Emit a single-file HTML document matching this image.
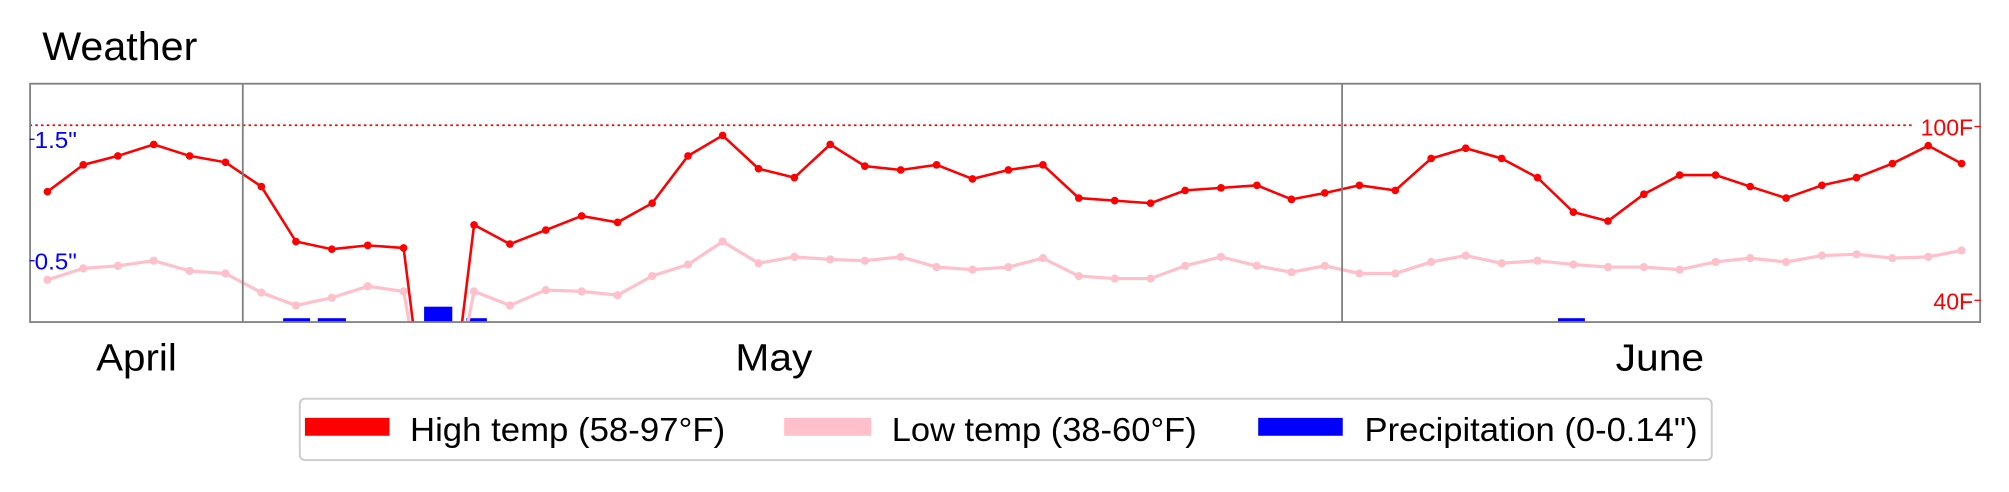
<!DOCTYPE html>
<html><head><meta charset="utf-8"><style>
html,body{margin:0;padding:0;background:#fff;width:2009px;height:492px;overflow:hidden}
svg{display:block}
text{font-family:"Liberation Sans",Arial,sans-serif}
</style></head><body>
<svg width="2009" height="492" viewBox="0 0 1568 385" preserveAspectRatio="none" xmlns="http://www.w3.org/2000/svg">
<defs><clipPath id="c"><rect x="23" y="65" width="1523" height="187"/></clipPath></defs>
<text x="33" y="47" font-size="31" fill="#000" textLength="121" lengthAdjust="spacingAndGlyphs">Weather</text>
<line x1="23" y1="98" x2="1492" y2="98" stroke="#f00" stroke-width="1.3" stroke-dasharray="2,2.5"/>
<g clip-path="url(#c)">
<g fill="#00f">
<rect x="221" y="249" width="21" height="3"/><rect x="248" y="249" width="22" height="3"/>
<rect x="331" y="240" width="22" height="12"/><rect x="364" y="249" width="16" height="3"/>
<rect x="1216" y="249" width="21" height="3"/>
</g>
<g stroke="#ffc0cb" fill="#ffc0cb" stroke-width="2.5">
<polyline fill="none" points="37,219 65,210 92,208 120,204 148,212 176,214 204,229 231,239 259,233 287,224 315,228 328,300"/>
<polyline fill="none" points="356,300 370,228 398,239 426,227 454,228 482,231 509,216 537,207 564,189 592,206 620,201 648,203 675,204 703,201 731,209 759,211 787,209 814,202 842,216 870,218 898,218 925,208 953,201 981,208 1008,213 1034,208 1061,214 1089,214 1117,205 1144,200 1172,206 1200,204 1228,207 1255,209 1283,209 1311,211 1339,205 1366,202 1394,205 1422,200 1449,199 1477,202 1505,201 1531,196"/>
</g>
<g fill="#ffc0cb">
<circle cx="37" cy="219" r="3.2"/><circle cx="65" cy="210" r="3.2"/><circle cx="92" cy="208" r="3.2"/><circle cx="120" cy="204" r="3.2"/><circle cx="148" cy="212" r="3.2"/><circle cx="176" cy="214" r="3.2"/><circle cx="204" cy="229" r="3.2"/><circle cx="231" cy="239" r="3.2"/><circle cx="259" cy="233" r="3.2"/><circle cx="287" cy="224" r="3.2"/><circle cx="315" cy="228" r="3.2"/><circle cx="370" cy="228" r="3.2"/><circle cx="398" cy="239" r="3.2"/><circle cx="426" cy="227" r="3.2"/><circle cx="454" cy="228" r="3.2"/><circle cx="482" cy="231" r="3.2"/><circle cx="509" cy="216" r="3.2"/><circle cx="537" cy="207" r="3.2"/><circle cx="564" cy="189" r="3.2"/><circle cx="592" cy="206" r="3.2"/><circle cx="620" cy="201" r="3.2"/><circle cx="648" cy="203" r="3.2"/><circle cx="675" cy="204" r="3.2"/><circle cx="703" cy="201" r="3.2"/><circle cx="731" cy="209" r="3.2"/><circle cx="759" cy="211" r="3.2"/><circle cx="787" cy="209" r="3.2"/><circle cx="814" cy="202" r="3.2"/><circle cx="842" cy="216" r="3.2"/><circle cx="870" cy="218" r="3.2"/><circle cx="898" cy="218" r="3.2"/><circle cx="925" cy="208" r="3.2"/><circle cx="953" cy="201" r="3.2"/><circle cx="981" cy="208" r="3.2"/><circle cx="1008" cy="213" r="3.2"/><circle cx="1034" cy="208" r="3.2"/><circle cx="1061" cy="214" r="3.2"/><circle cx="1089" cy="214" r="3.2"/><circle cx="1117" cy="205" r="3.2"/><circle cx="1144" cy="200" r="3.2"/><circle cx="1172" cy="206" r="3.2"/><circle cx="1200" cy="204" r="3.2"/><circle cx="1228" cy="207" r="3.2"/><circle cx="1255" cy="209" r="3.2"/><circle cx="1283" cy="209" r="3.2"/><circle cx="1311" cy="211" r="3.2"/><circle cx="1339" cy="205" r="3.2"/><circle cx="1366" cy="202" r="3.2"/><circle cx="1394" cy="205" r="3.2"/><circle cx="1422" cy="200" r="3.2"/><circle cx="1449" cy="199" r="3.2"/><circle cx="1477" cy="202" r="3.2"/><circle cx="1505" cy="201" r="3.2"/><circle cx="1531" cy="196" r="3.2"/>
</g>
<g stroke="#f00" stroke-width="2" fill="none">
<polyline points="37,150 65,129 92,122 120,113 148,122 176,127 204,146 231,189 259,195 287,192 315,194 327,290"/>
<polyline points="356,290 370,176 398,191 426,180 454,169 482,174 509,159 537,122 564,106 592,132 620,139 648,113 675,130 703,133 731,129 759,140 787,133 814,129 842,155 870,157 898,159 925,149 953,147 981,145 1008,156 1034,151 1061,145 1089,149 1117,124 1144,116 1172,124 1200,139 1228,166 1255,173 1283,152 1311,137 1339,137 1366,146 1394,155 1422,145 1449,139 1477,128 1505,114 1531,128"/>
</g>
<g fill="#f00">
<circle cx="37" cy="150" r="3"/><circle cx="65" cy="129" r="3"/><circle cx="92" cy="122" r="3"/><circle cx="120" cy="113" r="3"/><circle cx="148" cy="122" r="3"/><circle cx="176" cy="127" r="3"/><circle cx="204" cy="146" r="3"/><circle cx="231" cy="189" r="3"/><circle cx="259" cy="195" r="3"/><circle cx="287" cy="192" r="3"/><circle cx="315" cy="194" r="3"/><circle cx="370" cy="176" r="3"/><circle cx="398" cy="191" r="3"/><circle cx="426" cy="180" r="3"/><circle cx="454" cy="169" r="3"/><circle cx="482" cy="174" r="3"/><circle cx="509" cy="159" r="3"/><circle cx="537" cy="122" r="3"/><circle cx="564" cy="106" r="3"/><circle cx="592" cy="132" r="3"/><circle cx="620" cy="139" r="3"/><circle cx="648" cy="113" r="3"/><circle cx="675" cy="130" r="3"/><circle cx="703" cy="133" r="3"/><circle cx="731" cy="129" r="3"/><circle cx="759" cy="140" r="3"/><circle cx="787" cy="133" r="3"/><circle cx="814" cy="129" r="3"/><circle cx="842" cy="155" r="3"/><circle cx="870" cy="157" r="3"/><circle cx="898" cy="159" r="3"/><circle cx="925" cy="149" r="3"/><circle cx="953" cy="147" r="3"/><circle cx="981" cy="145" r="3"/><circle cx="1008" cy="156" r="3"/><circle cx="1034" cy="151" r="3"/><circle cx="1061" cy="145" r="3"/><circle cx="1089" cy="149" r="3"/><circle cx="1117" cy="124" r="3"/><circle cx="1144" cy="116" r="3"/><circle cx="1172" cy="124" r="3"/><circle cx="1200" cy="139" r="3"/><circle cx="1228" cy="166" r="3"/><circle cx="1255" cy="173" r="3"/><circle cx="1283" cy="152" r="3"/><circle cx="1311" cy="137" r="3"/><circle cx="1339" cy="137" r="3"/><circle cx="1366" cy="146" r="3"/><circle cx="1394" cy="155" r="3"/><circle cx="1422" cy="145" r="3"/><circle cx="1449" cy="139" r="3"/><circle cx="1477" cy="128" r="3"/><circle cx="1505" cy="114" r="3"/><circle cx="1531" cy="128" r="3"/>
</g>
</g>
<rect x="23.5" y="65.5" width="1522" height="186.5" fill="none" stroke="#808080" stroke-width="1.4"/>
<line x1="189.5" y1="65" x2="189.5" y2="252" stroke="#808080" stroke-width="1.4"/>
<line x1="1047.5" y1="65" x2="1047.5" y2="252" stroke="#808080" stroke-width="1.4"/>
<g fill="#00f" font-size="18">
<line x1="23" y1="109" x2="27" y2="109" stroke="#00f"/><text x="27" y="116" textLength="33" lengthAdjust="spacingAndGlyphs">1.5"</text>
<line x1="23" y1="204" x2="27" y2="204" stroke="#00f"/><text x="27" y="211" textLength="33" lengthAdjust="spacingAndGlyphs">0.5"</text>
</g>
<g fill="#f00" font-size="18" text-anchor="end">
<line x1="1541" y1="99" x2="1546" y2="99" stroke="#f00"/><text x="1540" y="106">100F</text>
<line x1="1541" y1="235" x2="1546" y2="235" stroke="#f00"/><text x="1540" y="242">40F</text>
</g>
<g font-size="30" fill="#000">
<text x="75" y="290" textLength="63" lengthAdjust="spacingAndGlyphs">April</text>
<text x="574" y="290" textLength="60" lengthAdjust="spacingAndGlyphs">May</text>
<text x="1261" y="290" textLength="69" lengthAdjust="spacingAndGlyphs">June</text>
</g>
<rect x="234" y="312" width="1102" height="48" rx="4" fill="#fff" stroke="#ccc" stroke-width="1.5"/>
<rect x="238" y="327" width="66" height="14" fill="#f00"/>
<rect x="612" y="327" width="68" height="14" fill="#ffc0cb"/>
<rect x="982" y="327" width="66" height="14" fill="#00f"/>
<g font-size="26" fill="#000">
<text x="320" y="345" textLength="246" lengthAdjust="spacingAndGlyphs">High temp (58-97°F)</text>
<text x="696" y="345" textLength="238" lengthAdjust="spacingAndGlyphs">Low temp (38-60°F)</text>
<text x="1065" y="345" textLength="260" lengthAdjust="spacingAndGlyphs">Precipitation (0-0.14")</text>
</g>
</svg>
</body></html>
